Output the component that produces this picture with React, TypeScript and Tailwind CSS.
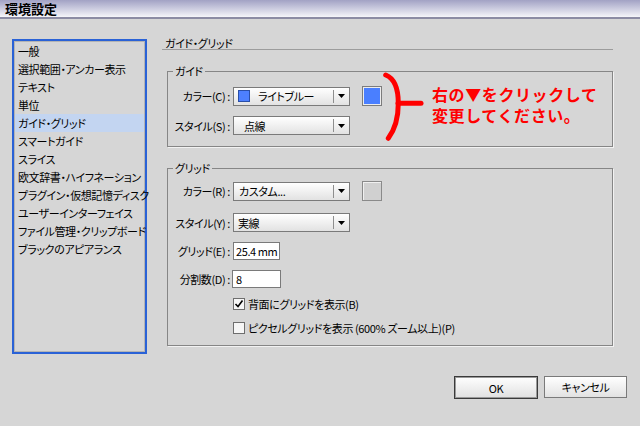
import React from "react";

const Arrow = () => (
  <svg width="7" height="4" viewBox="0 0 7 4">
    <path d="M0 0 H7 L3.5 4 Z" fill="#000" />
  </svg>
);

function Select({
  children,
  pl,
}: {
  children: React.ReactNode;
  pl: string;
}) {
  return (
    <div className="flex h-[19px] w-[117px] items-center border border-[#7a7a7a] bg-linear-to-b from-white to-[#e2e2e2]">
      <div className={`flex flex-1 items-center whitespace-nowrap ${pl}`}>{children}</div>
      <div className="h-[13px] w-px bg-[#8e8e8e]" />
      <div className="flex w-[15px] items-center justify-center">
        <Arrow />
      </div>
    </div>
  );
}

function Label({ children }: { children: React.ReactNode }) {
  return <div className="w-[62px] text-right whitespace-nowrap">{children}</div>;
}

function Swatch({ color }: { color: string }) {
  return (
    <div className="ml-[12px] h-[20px] w-[20px] border border-[#7c7c7c] bg-[#ececec] p-px">
      <div className="h-full w-full" style={{ backgroundColor: color }} />
    </div>
  );
}

function Check({ checked, children }: { checked?: boolean; children: React.ReactNode }) {
  return (
    <div className="flex h-[13px] items-center pl-[65px]">
      <div className="flex h-[12px] w-[12px] items-center justify-center border border-[#6e6e6e] bg-[#f6f6f6]">
        {checked && (
          <svg width="10" height="10" viewBox="0 0 10 10">
            <path d="M1.5 5 L4 7.5 L8.5 1.5" fill="none" stroke="#000" strokeWidth="1.6" />
          </svg>
        )}
      </div>
      <span className="ml-[3px] whitespace-nowrap">{children}</span>
    </div>
  );
}

const items = [
  "一般",
  "選択範囲・アンカー表示",
  "テキスト",
  "単位",
  "ガイド・グリッド",
  "スマートガイド",
  "スライス",
  "欧文辞書・ハイフネーション",
  "プラグイン・仮想記憶ディスク",
  "ユーザーインターフェイス",
  "ファイル管理・クリップボード",
  "ブラックのアピアランス",
];

export default function App() {
  return (
    <div className="relative h-[426px] w-[640px] overflow-hidden bg-[#d6d6d6] font-['Noto_Sans_CJK_JP',sans-serif] text-[11px] leading-[14px] tracking-[-0.4px] text-black [font-feature-settings:'palt']">
      {/* title bar */}
      <div className="flex h-[19px] items-center border-b-2 border-[#8c8ca4] bg-linear-to-b from-[#a2a2c4] to-[#f6f6fa] px-[5px] text-[13px] font-bold tracking-normal">
        環境設定
      </div>

      <div className="flex pl-[12px] pt-[20px]">
        {/* list */}
        <div className="h-[315px] w-[135px] border-2 border-[#2a62d6]">
          <div className="h-full w-full border border-[#b4b4b4]">
            {items.map((t, i) => (
              <div
                key={t}
                className={`flex h-[18px] items-center pl-[3px] whitespace-nowrap ${i === 4 ? "bg-[#c3d5f1]" : ""}`}
              >
                {t}
              </div>
            ))}
          </div>
        </div>

        {/* right column */}
        <div className="ml-[15px] w-[451px]">
          <div className="-mt-[1px] h-[12px] border-b border-[#9c9c9c] pl-[3px] leading-[11px]">
            ガイド・グリッド
          </div>

          {/* guide group */}
          <div className="relative ml-[5px] mt-[21px] w-[446px] border border-[#868686] pb-[11px] pt-[14px] shadow-[1px_1px_0_#f2f2f2]">
            <span className="absolute left-[5px] top-[-8px] bg-[#d6d6d6] px-[2px]">ガイド</span>
            <div className="flex flex-col gap-[10px]">
              <div className="flex items-center">
                <Label>カラー(C) :</Label>
                <div className="ml-[3px]">
                  <Select pl="pl-[4px]">
                    <div className="h-[12px] w-[12px] border border-[#2a4fa8] bg-[#4d80ff]" />
                    <span className="ml-[8px]">ライトブルー</span>
                  </Select>
                </div>
                <Swatch color="#4a7fff" />
              </div>
              <div className="flex items-center">
                <Label>スタイル(S) :</Label>
                <div className="ml-[3px]">
                  <Select pl="pl-[10px]">点線</Select>
                </div>
              </div>
            </div>
          </div>

          {/* grid group */}
          <div className="relative ml-[5px] mt-[21px] w-[446px] border border-[#868686] pb-[11px] pt-[12px] shadow-[1px_1px_0_#f2f2f2]">
            <span className="absolute left-[5px] top-[-8px] bg-[#d6d6d6] px-[2px]">グリッド</span>
            <div className="flex flex-col">
              <div className="flex items-center">
                <Label>カラー(R) :</Label>
                <div className="ml-[3px]">
                  <Select pl="pl-[5px]">カスタム...</Select>
                </div>
                <div className="ml-[12px] h-[20px] w-[20px] border border-[#8a8a8a] bg-[#d0d0d0] shadow-[inset_1px_1px_0_#f0f0f0]" />
              </div>
              <div className="mt-[12px] flex items-center">
                <Label>スタイル(Y) :</Label>
                <div className="ml-[3px]">
                  <Select pl="pl-[4px]">実線</Select>
                </div>
              </div>
              <div className="mt-[10px] flex items-center">
                <Label>グリッド(E) :</Label>
                <div className="ml-[3px] flex h-[18px] w-[47px] items-center border border-[#7a7a7a] bg-white pl-[2px] whitespace-nowrap">
                  25.4 mm
                </div>
              </div>
              <div className="mt-[10px] flex items-center">
                <Label>分割数(D) :</Label>
                <div className="ml-[2px] flex h-[18px] w-[49px] items-center border border-[#7a7a7a] bg-white pl-[3px]">
                  8
                </div>
              </div>
              <div className="mt-[9px]">
                <Check checked>背面にグリッドを表示(B)</Check>
              </div>
              <div className="mt-[11px]">
                <Check>ピクセルグリッドを表示 (600% ズーム以上)(P)</Check>
              </div>
            </div>
          </div>
        </div>
      </div>

      {/* buttons */}
      <div className="mt-[22px] flex justify-end gap-[6px] pr-[13px]">
        <button className="flex h-[23px] w-[84px] items-center justify-center border border-[#3a3a3a] bg-linear-to-b from-white to-[#e0e0e0] shadow-[inset_0_0_0_1px_#9a9a9a]">
          OK
        </button>
        <button className="flex h-[22px] w-[83px] items-center justify-center border border-[#7a7a7a] bg-linear-to-b from-white to-[#e2e2e2]">
          キャンセル
        </button>
      </div>

      {/* red annotation */}
      <svg className="absolute left-[378px] top-[70px]" width="50" height="75" viewBox="0 0 50 75">
        <path
          d="M7.7 5 Q20.3 10 20.3 33.3 Q20.3 55 10.3 68.3"
          fill="none"
          stroke="#ff0000"
          strokeWidth="5"
          strokeLinecap="round"
        />
        <path d="M20 33.3 H43" stroke="#ff0000" strokeWidth="5" strokeLinecap="round" />
      </svg>
      <div className="absolute left-[432px] top-[84px] text-[16px] font-bold leading-[21px] tracking-[0.6px] text-[#ff0000] [font-feature-settings:normal]">
        <div className="whitespace-nowrap">右の▼をクリックして</div>
        <div className="whitespace-nowrap">変更してください。</div>
      </div>
    </div>
  );
}
